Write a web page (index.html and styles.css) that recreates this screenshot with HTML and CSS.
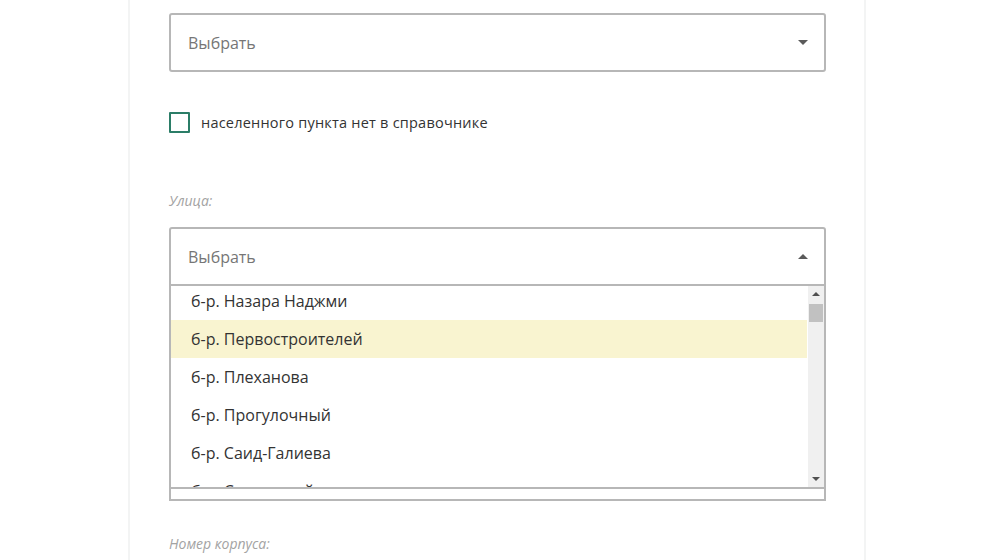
FILE: index.html
```html
<!DOCTYPE html>
<html lang="ru">
<head>
<meta charset="utf-8">
<title>Адрес</title>
<link rel="stylesheet" href="styles.css">
</head>
<body>
<div class="panel">
  <div class="select">
    <span class="placeholder">Выбрать</span>
    <span class="caret caret-down"></span>
  </div>

  <label class="check-row">
    <span class="checkbox"></span>
    <span class="check-label">населенного пункта нет в справочнике</span>
  </label>

  <div class="field-label label-street">Улица:</div>

  <div class="select select-open">
    <span class="placeholder">Выбрать</span>
    <span class="caret caret-up"></span>
  </div>
  <div class="dropdown">
    <div class="list">
      <ul class="items">
        <li class="item">б-р. Назара Наджми</li>
        <li class="item item-active">б-р. Первостроителей</li>
        <li class="item">б-р. Плеханова</li>
        <li class="item">б-р. Прогулочный</li>
        <li class="item">б-р. Саид-Галиева</li>
        <li class="item">б-р. Солнечный</li>
      </ul>
      <div class="scrollbar">
        <span class="sb-arrow sb-up"></span>
        <span class="sb-thumb"></span>
        <span class="sb-space"></span>
        <span class="sb-arrow sb-down"></span>
      </div>
    </div>
  </div>

  <div class="field-label label-corp">Номер корпуса:</div>
</div>
</body>
</html>
```

FILE: styles.css
```css
html, body {
  margin: 0;
  padding: 0;
  background: #ffffff;
  height: 560px;
  overflow: hidden;
}

body {
  font-family: "Open Sans", "Liberation Sans", sans-serif;
  color: #333333;
}

.panel {
  margin-left: 128px;
  width: 738px;
  height: 560px;
  box-sizing: border-box;
  border-left: 2px solid #f3f4f4;
  border-right: 2px solid #f3f4f4;
  padding: 13px 0 0 39px;
}

.select {
  width: 657px;
  height: 59px;
  box-sizing: border-box;
  border: 2px solid #b7b7b7;
  border-radius: 3px;
  display: flex;
  align-items: center;
  justify-content: space-between;
  padding: 0 16px 0 17px;
  background: #fff;
}

.select-open {
  border-radius: 3px 3px 0 0;
}

.placeholder {
  font-size: 16px;
  color: #767676;
  line-height: 20px;
}

.caret {
  width: 0;
  height: 0;
  border-left: 5px solid transparent;
  border-right: 5px solid transparent;
}

.caret-down {
  border-top: 5px solid #5a5a5a;
}

.caret-up {
  border-bottom: 5px solid #5a5a5a;
}

.check-row {
  display: flex;
  align-items: center;
  margin-top: 40px;
  height: 21px;
}

.checkbox {
  width: 21px;
  height: 21px;
  box-sizing: border-box;
  border: 2px solid #2b7d67;
  border-radius: 1px;
  margin-right: 11px;
  flex: none;
}

.check-label {
  font-size: 14.5px;
  color: #333;
  line-height: 20px;
  letter-spacing: 0.22px;
}

.field-label {
  font-size: 14px;
  font-style: italic;
  color: #a3a3a3;
  line-height: 18px;
}

.label-street {
  margin-top: 59px;
  margin-bottom: 17px;
}

.dropdown {
  width: 657px;
  box-sizing: border-box;
  border: 2px solid #b7b7b7;
  border-top: none;
  padding-bottom: 10px;
}

.list {
  display: flex;
  height: 203px;
  box-sizing: border-box;
  border-bottom: 2px solid #b7b7b7;
  overflow: hidden;
}

.items {
  list-style: none;
  margin: -4px 0 0 0;
  padding: 0;
  flex: 1;
}

.item {
  height: 38px;
  line-height: 38px;
  padding-left: 20px;
  font-size: 16px;
  color: #333;
  white-space: nowrap;
}

.item-active {
  background: #f9f4d0;
}

.scrollbar {
  width: 16px;
  flex: none;
  background: #f0f0f0;
  display: flex;
  flex-direction: column;
  align-items: center;
  margin-left: 1px;
}

.sb-arrow {
  width: 0;
  height: 0;
  border-left: 4px solid transparent;
  border-right: 4px solid transparent;
  flex: none;
}

.sb-up {
  border-bottom: 4px solid #505050;
  margin-top: 6px;
}

.sb-thumb {
  width: 14px;
  height: 18px;
  background: #c1c1c1;
  margin-top: 8px;
  flex: none;
}

.sb-space {
  flex: 1;
}

.sb-down {
  border-top: 4px solid #505050;
  margin-bottom: 6px;
}

.label-corp {
  margin-top: 34px;
}
```
